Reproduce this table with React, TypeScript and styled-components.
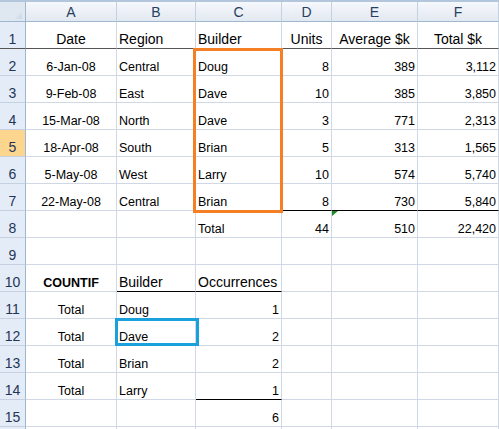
import React from 'react';
import styled, { createGlobalStyle, css } from 'styled-components';

const GlobalStyle = createGlobalStyle`
  *, *::before, *::after { box-sizing: border-box; }
  html, body { margin: 0; padding: 0; background: #ffffff; overflow: hidden; }
  body { font-family: "Liberation Sans", Arial, sans-serif; }
`;

type Align = 'left' | 'center' | 'right';

interface CellSpec {
  t?: string;
  a?: Align;
  big?: boolean;
  bold?: boolean;
  rule?: boolean;
  flag?: boolean;
}

const Sheet = styled.div`
  position: relative;
  display: grid;
  grid-template-columns: 26px 91px 79px 86px 50px 86px 81px;
  grid-template-rows: 20px repeat(16, 27px);
  width: 499px;
  height: 429px;
  overflow: hidden;
  border-top: 2px solid #b4c6dc;
  background: #ffffff;
`;

const Placed = styled.div<{ $r: number; $c: number }>`
  grid-row: ${p => p.$r};
  grid-column: ${p => p.$c};
`;

const Corner = styled(Placed)`
  position: relative;
  background: #dfe7f1;
  border-right: 1px solid #9eb6ce;
  border-bottom: 1px solid #9eb6ce;
  &::after {
    content: '';
    position: absolute;
    right: 3px;
    bottom: 2px;
    width: 9px;
    height: 9px;
    background: linear-gradient(135deg, #f4f7fb, #c9d5e4);
    clip-path: polygon(100% 0, 100% 100%, 0 100%);
  }
`;

const ColHeader = styled(Placed)`
  display: flex;
  align-items: center;
  justify-content: center;
  background: linear-gradient(#f5f8fc, #e3e9f1);
  border-right: 1px solid #c5d1df;
  border-bottom: 1px solid #9eb6ce;
  font-size: 14px;
  color: #27405f;
  padding-top: 1px;
`;

const RowHeader = styled(Placed)<{ $active?: boolean; $frozen?: boolean }>`
  display: flex;
  align-items: flex-end;
  justify-content: center;
  padding-bottom: 1px;
  background: ${p => (p.$active ? '#fcd68f' : '#e4ecf7')};
  border-right: 1px solid #9eb6ce;
  border-bottom: 1px solid ${p => (p.$frozen ? '#555555' : '#c5d1e1')};
  font-size: 14px;
  line-height: 15px;
  color: #1f3556;
`;

const Cell = styled(Placed)<{
  $align: Align;
  $big?: boolean;
  $bold?: boolean;
  $rule?: boolean;
  $frozen?: boolean;
  $flag?: boolean;
}>`
  position: relative;
  display: flex;
  align-items: flex-end;
  justify-content: ${p =>
    p.$align === 'left' ? 'flex-start' : p.$align === 'right' ? 'flex-end' : 'center'};
  padding: 0 2px ${p => (p.$big ? 1 : 0)}px 2px;
  border-right: 1px solid #d0d7e5;
  border-bottom: 1px solid
    ${p => (p.$frozen ? '#555555' : p.$rule ? '#000000' : '#d0d7e5')};
  font-size: ${p => (p.$big ? 14 : 12.5)}px;
  font-weight: ${p => (p.$bold ? 700 : 400)};
  line-height: 15px;
  white-space: nowrap;
  color: #000000;
  min-width: 0;
  ${p =>
    p.$flag &&
    css`
      &::before {
        content: '';
        position: absolute;
        left: 0;
        top: 0;
        width: 6px;
        height: 5px;
        background: #1f8a24;
        clip-path: polygon(0 0, 100% 0, 0 100%);
      }
    `}
`;

const SelectBox = styled.div<{ $color: string }>`
  position: relative;
  z-index: 2;
  pointer-events: none;
  border: 3px solid ${p => p.$color};
`;

const OrangeBox = styled(SelectBox)`
  grid-column: 4;
  grid-row: 3 / 9;
  margin: -1px -1px -2px -3px;
`;

const BlueBox = styled(SelectBox)`
  grid-column: 3;
  grid-row: 13;
  margin: -1px -3px 0 -2px;
`;

const cols = ['A', 'B', 'C', 'D', 'E', 'F'];

const data: [string, string, string, string, string, string][] = [
  ['6-Jan-08', 'Central', 'Doug', '8', '389', '3,112'],
  ['9-Feb-08', 'East', 'Dave', '10', '385', '3,850'],
  ['15-Mar-08', 'North', 'Dave', '3', '771', '2,313'],
  ['18-Apr-08', 'South', 'Brian', '5', '313', '1,565'],
  ['5-May-08', 'West', 'Larry', '10', '574', '5,740'],
  ['22-May-08', 'Central', 'Brian', '8', '730', '5,840'],
];

const E: CellSpec = {};

const rows: CellSpec[][] = [
  [
    { t: 'Date', a: 'center', big: true },
    { t: 'Region', big: true },
    { t: 'Builder', big: true },
    { t: 'Units', a: 'center', big: true },
    { t: 'Average $k', a: 'center', big: true },
    { t: 'Total $k', a: 'center', big: true },
  ],
  ...data.map((d, i) => {
    const last = i === data.length - 1;
    return [
      { t: d[0], a: 'center' as Align },
      { t: d[1] },
      { t: d[2], rule: last },
      { t: d[3], a: 'right' as Align, rule: last },
      { t: d[4], a: 'right' as Align, rule: last },
      { t: d[5], a: 'right' as Align, rule: last },
    ];
  }),
  [E, E, { t: 'Total' }, { t: '44', a: 'right' }, { t: '510', a: 'right', flag: true }, { t: '22,420', a: 'right' }],
  [E, E, E, E, E, E],
  [
    { t: 'COUNTIF', a: 'center', bold: true },
    { t: 'Builder', big: true, rule: true },
    { t: 'Occurrences', big: true, rule: true },
    E,
    E,
    E,
  ],
  ...[
    ['Doug', '1'],
    ['Dave', '2'],
    ['Brian', '2'],
    ['Larry', '1'],
  ].map(([n, c], i) => [
    { t: 'Total', a: 'center' as Align },
    { t: n },
    { t: c, a: 'right' as Align, rule: i === 3 },
    E,
    E,
    E,
  ]),
  [E, E, { t: '6', a: 'right' }, E, E, E],
  [E, E, E, E, E, E],
];

const VISIBLE_LABELS = 15;

export default function App() {
  return (
    <>
      <GlobalStyle />
      <Sheet>
        <Corner $r={1} $c={1} />
        {cols.map((c, i) => (
          <ColHeader key={c} $r={1} $c={i + 2}>
            {c}
          </ColHeader>
        ))}
        {rows.map((row, r) => (
          <React.Fragment key={r}>
            <RowHeader $r={r + 2} $c={1} $active={r === 4} $frozen={r === 0}>
              {r < VISIBLE_LABELS ? r + 1 : ''}
            </RowHeader>
            {row.map((c, ci) => (
              <Cell
                key={ci}
                $r={r + 2}
                $c={ci + 2}
                $align={c.a ?? 'left'}
                $big={c.big}
                $bold={c.bold}
                $rule={c.rule}
                $frozen={r === 0}
                $flag={c.flag}
              >
                {c.t}
              </Cell>
            ))}
          </React.Fragment>
        ))}
        <OrangeBox $color="#f57f25" />
        <BlueBox $color="#1aa0db" />
      </Sheet>
    </>
  );
}
